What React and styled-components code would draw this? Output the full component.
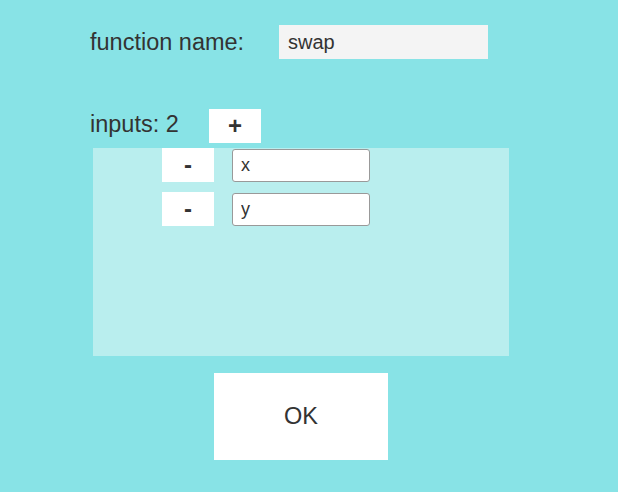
import React, { useState } from "react";
import styled, { createGlobalStyle } from "styled-components";

const Global = createGlobalStyle`
  body {
    margin: 0;
    background: #88e3e6;
    font-family: "Liberation Sans", Arial, sans-serif;
    color: #333;
  }
`;

const Page = styled.div`
  width: 618px;
  height: 492px;
  padding: 25px 0 0 90px;
  box-sizing: border-box;
`;

const Row = styled.div`
  display: flex;
  align-items: center;
`;

const Label = styled.span`
  font-size: 23.5px;
  width: ${(p) => p.width || "auto"};
  margin-top: ${(p) => p.shift || "0"};
`;

const NameInput = styled.input`
  width: 209px;
  height: 34px;
  box-sizing: border-box;
  border: none;
  background: #f4f4f4;
  padding: 0 9px;
  font-family: inherit;
  font-size: 20px;
  color: #333;
  outline: none;
`;

const InputsRow = styled(Row)`
  margin-top: 50px;
`;

const SquareButton = styled.button`
  width: 52px;
  height: 34px;
  border: none;
  background: #fff;
  font-family: inherit;
  font-size: 24px;
  font-weight: bold;
  color: #333;
  padding: 0;
  cursor: pointer;
`;

const Panel = styled.div`
  margin: 5px 0 0 3px;
  width: 416px;
  height: 208px;
  background: #b9eeee;
  display: flex;
  flex-direction: column;
  gap: 10px;
`;

const ParamRow = styled.div`
  display: flex;
  align-items: center;
  gap: 18px;
  padding-left: 69px;
`;

const ParamInput = styled.input`
  width: 138px;
  height: 33px;
  box-sizing: border-box;
  border: 1px solid #999;
  border-radius: 3px;
  background: #fff;
  padding: 0 8px;
  font-family: inherit;
  font-size: 18px;
  color: #333;
  outline: none;
`;

const OkButton = styled.button`
  display: block;
  margin: 17px 0 0 124px;
  width: 174px;
  height: 87px;
  border: none;
  background: #fff;
  font-family: inherit;
  font-size: 23.5px;
  color: #333;
  cursor: pointer;
`;

export default function App() {
  const [name, setName] = useState("swap");
  const [params, setParams] = useState(["x", "y"]);

  return (
    <Page>
      <Global />
      <Row>
        <Label width="189px">function name:</Label>
        <NameInput value={name} onChange={(e) => setName(e.target.value)} />
      </Row>
      <InputsRow>
        <Label width="119px" shift="-4px">inputs: {params.length}</Label>
        <SquareButton onClick={() => setParams([...params, ""])}>+</SquareButton>
      </InputsRow>
      <Panel>
        {params.map((p, i) => (
          <ParamRow key={i}>
            <SquareButton onClick={() => setParams(params.filter((_, j) => j !== i))}>-</SquareButton>
            <ParamInput
              value={p}
              onChange={(e) => setParams(params.map((v, j) => (j === i ? e.target.value : v)))}
            />
          </ParamRow>
        ))}
      </Panel>
      <OkButton>OK</OkButton>
    </Page>
  );
}
